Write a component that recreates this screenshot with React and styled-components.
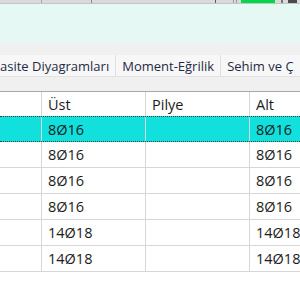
import styled, { createGlobalStyle } from 'styled-components';

const GlobalStyle = createGlobalStyle`
  html, body {
    margin: 0;
    padding: 0;
    overflow: hidden;
    background: #ffffff;
  }
  body {
    font-family: "Open Sans", "Liberation Sans", sans-serif;
  }
`;

const Window = styled.div`
  width: 300px;
  height: 300px;
  overflow: hidden;
  display: flex;
  flex-direction: column;
  background: #fff;
`;

/* the bottom edge of the toolbar above, scrolled almost out of view */
const TopStrip = styled.div`
  height: 4px;
  flex: none;
  display: flex;
  background: #dadada;
  border-bottom: 1px solid #c4c4c4;
  box-sizing: border-box;
`;

const StripCell = styled.div`
  flex: none;
  width: ${p => p.$w}px;
  height: 100%;
  background: ${p => p.$bg || 'transparent'};
  border-right: ${p => (p.$line ? `1px solid ${p.$line}` : 'none')};
  box-sizing: border-box;
`;

const MintPanel = styled.div`
  height: 39px;
  flex: none;
  background: #e6f8f3;
`;

const TabBar = styled.div`
  flex: none;
  height: 49px;
  background: #f0f0f0;
  padding-top: 12px;
  box-sizing: border-box;
  border-bottom: 1px solid #a8a8a8;
  display: flex;
  flex-direction: column;
`;

const TabRow = styled.div`
  display: flex;
  height: 21px;
  border-bottom: 1px solid #e2e2e2;
  white-space: nowrap;
  overflow: hidden;
`;

const Tab = styled.div`
  flex: none;
  display: flex;
  align-items: center;
  padding: ${p => (p.$cut ? '0 6px 0 0' : '0 6px')};
  background: #f7f7f7;
  border-right: 1px solid #dedede;
  font-size: 13px;
  color: #1f2a44;
`;

const Grid = styled.div`
  display: flex;
  flex-direction: column;
  width: 354px;
`;

const Row = styled.div`
  display: grid;
  grid-template-columns: 42px 104px 104px 104px;
  height: ${p => (p.$header ? 24 : 26)}px;
  box-sizing: border-box;
  background: ${p => (p.$selected ? '#12e0dc' : '#fff')};
  border-top: ${p => (p.$selected ? '1px dotted #3a3a3a' : 'none')};
  border-bottom: ${p =>
    p.$header ? 'none' : p.$selected ? '1px dotted #3a3a3a' : '1px solid #d6d6d6'};
`;

const Cell = styled.div`
  display: flex;
  align-items: center;
  padding-left: 6px;
  border-right: 1px solid #d6d6d6;
  font-size: 14.5px;
  color: #1c1c1c;
  white-space: nowrap;
  overflow: hidden;
`;

const strip = [
  { w: 42, line: '#a8a8a8' },
  { w: 50, line: '#8c8c8c' },
  { w: 124, line: '#5a5a5a' },
  { w: 18, line: '#9a9a9a' },
  { w: 3, line: '#9a9a9a' },
  { w: 4 },
  { w: 34, bg: '#00d84a' },
  { w: 6 },
  { w: 2, bg: '#777' },
  { w: 5 },
  { w: 9, bg: '#4a4a4a' },
];

const rows = [
  { ust: '8Ø16', pilye: '', alt: '8Ø16' },
  { ust: '8Ø16', pilye: '', alt: '8Ø16' },
  { ust: '8Ø16', pilye: '', alt: '8Ø16' },
  { ust: '8Ø16', pilye: '', alt: '8Ø16' },
  { ust: '14Ø18', pilye: '', alt: '14Ø18' },
  { ust: '14Ø18', pilye: '', alt: '14Ø18' },
];

export default function App() {
  return (
    <>
      <GlobalStyle />
      <Window>
        <TopStrip>
          {strip.map((s, i) => (
            <StripCell key={i} $w={s.w} $bg={s.bg} $line={s.line} />
          ))}
        </TopStrip>
        <MintPanel />
        <TabBar>
          <TabRow>
            <Tab $cut>asite Diyagramları</Tab>
            <Tab>Moment-Eğrilik</Tab>
            <Tab>Sehim ve Ç</Tab>
          </TabRow>
        </TabBar>
        <Grid>
          <Row $header>
            <Cell />
            <Cell>Üst</Cell>
            <Cell>Pilye</Cell>
            <Cell>Alt</Cell>
          </Row>
          {rows.map((r, i) => (
            <Row key={i} $selected={i === 0}>
              <Cell />
              <Cell>{r.ust}</Cell>
              <Cell>{r.pilye}</Cell>
              <Cell>{r.alt}</Cell>
            </Row>
          ))}
        </Grid>
      </Window>
    </>
  );
}
